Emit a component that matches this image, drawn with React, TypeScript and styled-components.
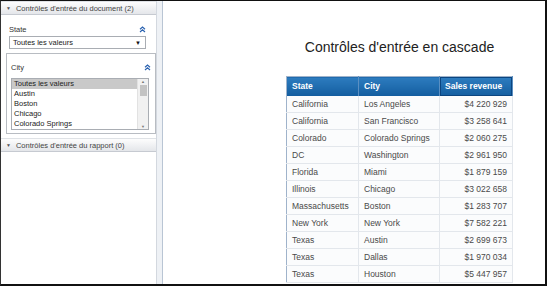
import styled, { createGlobalStyle } from "styled-components";

const GlobalStyle = createGlobalStyle`
  html, body {
    margin: 0;
    padding: 0;
    background: #fff;
  }
`;

const Frame = styled.div`
  width: 547px;
  height: 286px;
  box-sizing: border-box;
  border-top: 1px solid #111;
  border-left: 1px solid #333;
  border-right: 2px solid #111;
  border-bottom: 2px solid #111;
  display: flex;
  overflow: hidden;
  font-family: "Liberation Sans", Arial, sans-serif;
`;

const Side = styled.div`
  width: 155px;
  display: flex;
  flex-direction: column;
  background: #fff;
`;

const Splitter = styled.div`
  width: 5px;
  background: #eef1f5;
  border-left: 1px solid #d3d8df;
  border-right: 1px solid #b9c5d4;
`;

const PanelHeader = styled.div`
  height: 12px;
  display: flex;
  align-items: center;
  gap: 5px;
  padding-left: 5px;
  background: linear-gradient(#fdfdfd, #e4e6ea);
  border-bottom: 1px solid #c6cad1;
  border-top: 1px solid #dfe2e6;
  font-size: 7.5px;
  color: #444;
  white-space: nowrap;
`;

const Caret = styled.span`
  font-size: 5px;
  color: #555;
`;

const Section = styled.div<{ $boxed?: boolean }>`
  margin: ${({ $boxed }) => ($boxed ? "4px 0 0 5px" : "8px 0 0 8px")};
  padding: ${({ $boxed }) => ($boxed ? "7px 2px 3px 4px" : "0 8px 0 0")};
  border: ${({ $boxed }) => ($boxed ? "1px solid #b8bcc2" : "none")};
`;

const LabelRow = styled.div`
  display: flex;
  justify-content: space-between;
  align-items: center;
  font-size: 7.5px;
  color: #333;
  height: 12px;
  padding-right: 2px;
`;

const Chevron = () => (
  <svg width="7" height="7" viewBox="0 0 7 7">
    <path d="M1 3.2 L3.5 1 L6 3.2 M1 6 L3.5 3.8 L6 6" stroke="#2a62b0" strokeWidth="1.2" fill="none" />
  </svg>
);

const Select = styled.div`
  margin-top: 1px;
  width: 128px;
  height: 11px;
  border: 1px solid #a9adb3;
  display: flex;
  align-items: center;
  justify-content: space-between;
  padding: 0 4px 0 3px;
  font-size: 7.5px;
  color: #222;
`;

const List = styled.div`
  margin-top: 5px;
  width: 136px;
  height: 50px;
  border: 1px solid #a9adb3;
  display: flex;
`;

const Items = styled.div`
  flex: 1;
  display: flex;
  flex-direction: column;
`;

const Item = styled.div<{ $selected?: boolean }>`
  height: 10px;
  line-height: 10px;
  padding-left: 2px;
  font-size: 7.5px;
  color: #222;
  background: ${({ $selected }) => ($selected ? "#c9c9c9" : "transparent")};
  white-space: nowrap;
`;

const Scrollbar = styled.div`
  width: 10px;
  background: #f1f1f1;
  border-left: 1px solid #e2e2e2;
  display: flex;
  flex-direction: column;
  align-items: center;
  font-size: 4px;
  color: #777;
`;

const Thumb = styled.div`
  width: 7px;
  height: 11px;
  background: #c3c3c3;
  margin: 1px 0 auto;
`;

const Gap = styled.div`
  height: 4px;
`;

const Main = styled.div`
  flex: 1;
  display: flex;
  flex-direction: column;
  align-items: center;
  padding-left: 91px;
  padding-top: 38px;
`;

const Title = styled.h1`
  margin: 0;
  font-weight: normal;
  font-size: 14px;
  color: #222;
  line-height: 17px;
`;

const Table = styled.table`
  margin-top: 20px;
  border-collapse: collapse;
  border: 1px solid #9fb3cb;
  font-size: 8.5px;
`;

const Th = styled.th<{ $w: number; $outlined?: boolean }>`
  width: ${({ $w }) => $w}px;
  height: 19px;
  padding: 0 5px;
  box-sizing: border-box;
  text-align: left;
  color: #fff;
  font-weight: bold;
  background: linear-gradient(#2d7cbf, #135d9f);
  border-right: 1px solid #5a8fc2;
  box-shadow: ${({ $outlined }) => ($outlined ? "inset 0 0 0 1px #0b4580" : "none")};
`;

const Td = styled.td<{ $right?: boolean }>`
  height: 16px;
  padding: 0 5px;
  color: #4a4a4a;
  text-align: ${({ $right }) => ($right ? "right" : "left")};
  border-right: 1px solid #e3e7ec;
  border-bottom: 1px solid #e3e7ec;
  background: #fbfcfd;
`;

const rows: [string, string, string][] = [
  ["California", "Los Angeles", "$4 220 929"],
  ["California", "San Francisco", "$3 258 641"],
  ["Colorado", "Colorado Springs", "$2 060 275"],
  ["DC", "Washington", "$2 961 950"],
  ["Florida", "Miami", "$1 879 159"],
  ["Illinois", "Chicago", "$3 022 658"],
  ["Massachusetts", "Boston", "$1 283 707"],
  ["New York", "New York", "$7 582 221"],
  ["Texas", "Austin", "$2 699 673"],
  ["Texas", "Dallas", "$1 970 034"],
  ["Texas", "Houston", "$5 447 957"],
];

export default function App() {
  return (
    <>
      <GlobalStyle />
      <Frame>
        <Side>
          <PanelHeader>
            <Caret>▼</Caret>Contrôles d'entrée du document (2)
          </PanelHeader>
          <Section>
            <LabelRow>
              State
              <Chevron />
            </LabelRow>
            <Select>
              Toutes les valeurs
              <Caret style={{ fontSize: 6, color: "#111" }}>▼</Caret>
            </Select>
          </Section>
          <Section $boxed>
            <LabelRow>
              City
              <Chevron />
            </LabelRow>
            <List>
              <Items>
                <Item $selected>Toutes les valeurs</Item>
                <Item>Austin</Item>
                <Item>Boston</Item>
                <Item>Chicago</Item>
                <Item>Colorado Springs</Item>
              </Items>
              <Scrollbar>
                ▲
                <Thumb />
                ▼
              </Scrollbar>
            </List>
          </Section>
          <Gap />
          <PanelHeader>
            <Caret>▼</Caret>Contrôles d'entrée du rapport (0)
          </PanelHeader>
        </Side>
        <Splitter />
        <Main>
          <Title>Contrôles d'entrée en cascade</Title>
          <Table>
            <thead>
              <tr>
                <Th $w={72}>State</Th>
                <Th $w={81}>City</Th>
                <Th $w={73} $outlined>
                  Sales revenue
                </Th>
              </tr>
            </thead>
            <tbody>
              {rows.map((r, i) => (
                <tr key={i}>
                  <Td>{r[0]}</Td>
                  <Td>{r[1]}</Td>
                  <Td $right>{r[2]}</Td>
                </tr>
              ))}
            </tbody>
          </Table>
        </Main>
      </Frame>
    </>
  );
}
